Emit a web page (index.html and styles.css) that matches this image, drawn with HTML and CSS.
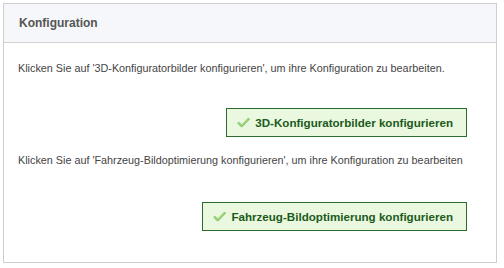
FILE: index.html
```html
<!DOCTYPE html>
<html lang="de">
<head>
<meta charset="utf-8">
<link rel="stylesheet" href="styles.css">
</head>
<body>
<div class="panel">
  <div class="panel-header">Konfiguration</div>
  <div class="panel-body">
    <p class="hint hint-first">Klicken Sie auf '3D-Konfiguratorbilder konfigurieren', um ihre Konfiguration zu bearbeiten.</p>
    <div class="btn-row btn-row-first">
      <button class="btn"><svg class="check" width="13" height="11" viewBox="0 0 13 11"><path d="M1.8 6.2 L4.8 9 L11.5 2.2" fill="none" stroke="#86c664" stroke-width="2.4" stroke-linecap="round" stroke-linejoin="round"/><path d="M2.4 6.3 L4.8 8.3 L11 2.5" fill="none" stroke="#c4e8a8" stroke-width="0.8" stroke-linecap="round"/></svg>3D-Konfiguratorbilder konfigurieren</button>
    </div>
    <p class="hint hint-second">Klicken Sie auf 'Fahrzeug-Bildoptimierung konfigurieren', um ihre Konfiguration zu bearbeiten</p>
    <div class="btn-row btn-row-second">
      <button class="btn"><svg class="check" width="13" height="11" viewBox="0 0 13 11"><path d="M1.8 6.2 L4.8 9 L11.5 2.2" fill="none" stroke="#86c664" stroke-width="2.4" stroke-linecap="round" stroke-linejoin="round"/><path d="M2.4 6.3 L4.8 8.3 L11 2.5" fill="none" stroke="#c4e8a8" stroke-width="0.8" stroke-linecap="round"/></svg>Fahrzeug-Bildoptimierung konfigurieren</button>
    </div>
  </div>
</div>
</body>
</html>
```
FILE: styles.css
```css
html, body {
  margin: 0;
  padding: 0;
  background: #fff;
}
body {
  padding: 3px 0 0 3px;
  font-family: "Liberation Sans", Arial, sans-serif;
}
.panel {
  width: 492px;
  height: 258px;
  border: 1px solid #cfcfcf;
  display: flex;
  flex-direction: column;
  background: #fff;
}
.panel-header {
  height: 38px;
  background: #f5f7fa;
  border-bottom: 1px solid #d2d2d2;
  display: flex;
  align-items: center;
  padding-left: 15px;
  font-size: 12px;
  font-weight: bold;
  color: #555;
}
.panel-body {
  padding: 0 0 0 14px;
  display: flex;
  flex-direction: column;
}
.hint {
  margin: 0;
  font-size: 10.8px;
  line-height: 14px;
  color: #444;
  white-space: nowrap;
}
.hint-first { margin-top: 18px; }
.hint-second { margin-top: 16px; }
.btn-row {
  display: flex;
  justify-content: flex-end;
  padding-right: 29px;
}
.btn-row-first { margin-top: 33px; }
.btn-row-second { margin-top: 35px; }
.btn {
  height: 29px;
  border: 1px solid #2c6b2c;
  background: #e9f8df;
  color: #1c5a1c;
  font-family: "Liberation Sans", Arial, sans-serif;
  font-size: 11.6px;
  font-weight: bold;
  padding: 0 13px 0 10px;
  display: flex;
  align-items: center;
  gap: 5px;
  border-radius: 0;
}
.check { display: block; }
```
